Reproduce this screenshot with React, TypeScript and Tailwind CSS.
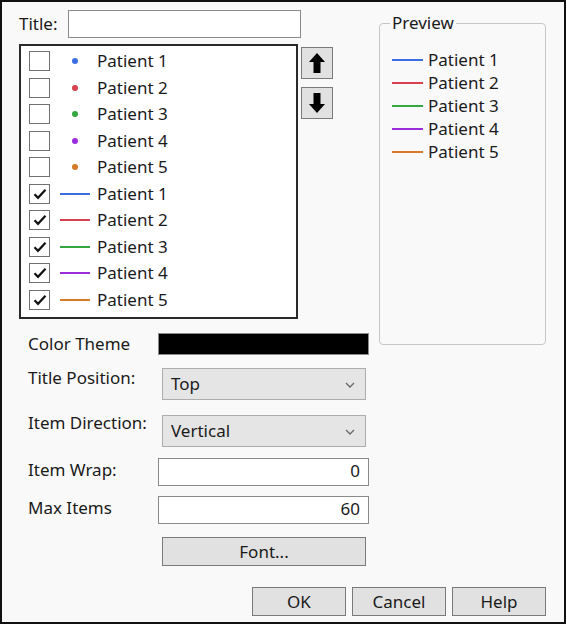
import React from 'react';

const PATIENTS = [
  { name: 'Patient 1', color: '#3a6ee0' },
  { name: 'Patient 2', color: '#d9404f' },
  { name: 'Patient 3', color: '#33a83f' },
  { name: 'Patient 4', color: '#9a2ddb' },
  { name: 'Patient 5', color: '#d67a27' },
];

function CheckBox({ checked }: { checked: boolean }) {
  return (
    <div className="w-[21px] h-[20px] border-[1.5px] border-[#707070] bg-white flex items-center justify-center shrink-0">
      {checked && (
        <svg width="14" height="12" viewBox="0 0 14 12">
          <path d="M1.5 6.2 L5 9.8 L12.5 1.8" fill="none" stroke="#111" strokeWidth="2.2" />
        </svg>
      )}
    </div>
  );
}

function Swatch({ color, kind }: { color: string; kind: 'dot' | 'line' }) {
  return (
    <div className="w-[30px] flex items-center justify-center shrink-0">
      {kind === 'dot' ? (
        <span className="w-[6px] h-[6px] rounded-full" style={{ backgroundColor: color }} />
      ) : (
        <span className="w-[30px] h-[2px]" style={{ backgroundColor: color }} />
      )}
    </div>
  );
}

function Chevron() {
  return (
    <svg width="10" height="6" viewBox="0 0 10 6" className="absolute right-[10px] top-[13px]">
      <path d="M1 1 L5 5 L9 1" fill="none" stroke="#666" strokeWidth="1.3" />
    </svg>
  );
}

function ArrowButton({ dir }: { dir: 'up' | 'down' }) {
  return (
    <div className="w-[32px] h-[32px] bg-[#e1e1e1] border-[1.5px] border-[#7a7a7a] flex items-center justify-center">
      <svg width="16" height="20" viewBox="0 0 16 20" className={dir === 'down' ? 'rotate-180' : ''}>
        <path d="M8 0 L16 9 L11.5 9 L11.5 20 L4.5 20 L4.5 9 L0 9 Z" fill="#000" />
      </svg>
    </div>
  );
}

export default function App() {
  const font = { fontFamily: '"Noto Sans", "Liberation Sans", sans-serif' };
  return (
    <div className="w-[567px] h-[626px] bg-white text-[17px] text-[#1a1a1a]" style={font}>
      <div className="w-[566px] h-[624px] border-2 border-[#111] bg-[#f9f9f9] flex flex-col">
        <div className="flex">
          {/* left column */}
          <div className="w-[370px] flex flex-col">
            {/* Title row */}
            <div className="flex items-center mt-[8px] h-[28px]">
              <span className="ml-[17px] w-[49px] leading-[20px]">Title:</span>
              <div className="w-[233px] h-[28px] bg-white border-[1.5px] border-[#8a8a8a]" />
            </div>

            {/* list + arrows */}
            <div className="flex mt-[6px] ml-[17px]">
              <div className="w-[279px] h-[275px] border-2 border-[#2a2a2a] bg-white pt-[2px] pl-[8px]">
                {PATIENTS.map(p => (
                  <div key={'d' + p.name} className="flex items-center h-[26.5px]">
                    <CheckBox checked={false} />
                    <div className="w-[10px]" />
                    <Swatch color={p.color} kind="dot" />
                    <span className="ml-[7px] leading-[20px]">{p.name}</span>
                  </div>
                ))}
                {PATIENTS.map(p => (
                  <div key={'l' + p.name} className="flex items-center h-[26.5px]">
                    <CheckBox checked />
                    <div className="w-[10px]" />
                    <Swatch color={p.color} kind="line" />
                    <span className="ml-[7px] leading-[20px]">{p.name}</span>
                  </div>
                ))}
              </div>
              <div className="ml-[3px] mt-[3px] flex flex-col gap-[8px]">
                <ArrowButton dir="up" />
                <ArrowButton dir="down" />
              </div>
            </div>

            {/* form rows */}
            <div className="ml-[26px] flex flex-col">
              <div className="flex mt-[14px] h-[22px]">
                <span className="w-[130px] leading-[20px] mt-[1px]">Color Theme</span>
                <div className="w-[211px] h-[22px] bg-black border-[1.5px] border-[#8a8a8a]" />
              </div>

              <div className="flex mt-[13px] h-[32px]">
                <span className="w-[134px] leading-[20px]">Title Position:</span>
                <div className="relative w-[204px] h-[32px] bg-[#e5e5e5] border-[1.5px] border-[#adadad] pl-[8px] pt-[5px] leading-[20px]">
                  Top
                  <Chevron />
                </div>
              </div>

              <div className="flex mt-[15px] h-[32px]">
                <span className="w-[134px] leading-[20px] -mt-[2px]">Item Direction:</span>
                <div className="relative w-[204px] h-[32px] bg-[#e5e5e5] border-[1.5px] border-[#adadad] pl-[8px] pt-[5px] leading-[20px]">
                  Vertical
                  <Chevron />
                </div>
              </div>

              <div className="flex mt-[11px] h-[28px]">
                <span className="w-[130px] leading-[20px] mt-[2px]">Item Wrap:</span>
                <div className="w-[211px] h-[28px] bg-white border-[1.5px] border-[#8a8a8a] text-right pr-[8px] pt-[2px] leading-[20px]">0</div>
              </div>

              <div className="flex mt-[10px] h-[28px]">
                <span className="w-[130px] leading-[20px] mt-[2px]">Max Items</span>
                <div className="w-[211px] h-[28px] bg-white border-[1.5px] border-[#8a8a8a] text-right pr-[8px] pt-[2px] leading-[20px]">60</div>
              </div>

              <div className="flex mt-[13px]">
                <div className="ml-[134px] w-[204px] h-[29px] bg-[#e1e1e1] border-[1.5px] border-[#7a7a7a] flex items-center justify-center leading-[20px]">
                  Font...
                </div>
              </div>
            </div>
          </div>

          {/* preview */}
          <fieldset className="ml-[7px] mt-[11px] w-[167px] h-[332px] border-[1.5px] border-[#c6c6c6] rounded-[4px]">
            <legend className="ml-[10px] px-[2px] leading-[20px]">Preview</legend>
            <div className="mt-[15px] ml-[12px] flex flex-col">
              {PATIENTS.map(p => (
                <div key={'p' + p.name} className="flex items-center h-[23px]">
                  <span className="w-[31px] h-[2px]" style={{ backgroundColor: p.color }} />
                  <span className="ml-[5px] leading-[20px]">{p.name}</span>
                </div>
              ))}
            </div>
          </fieldset>
        </div>

        {/* bottom buttons */}
        <div className="flex justify-end gap-[6px] mt-[21px] pr-[18px]">
          {['OK', 'Cancel', 'Help'].map(b => (
            <div key={b} className="w-[94px] h-[29px] bg-[#e1e1e1] border-[1.5px] border-[#7a7a7a] flex items-center justify-center leading-[20px]">
              {b}
            </div>
          ))}
        </div>
      </div>
    </div>
  );
}
